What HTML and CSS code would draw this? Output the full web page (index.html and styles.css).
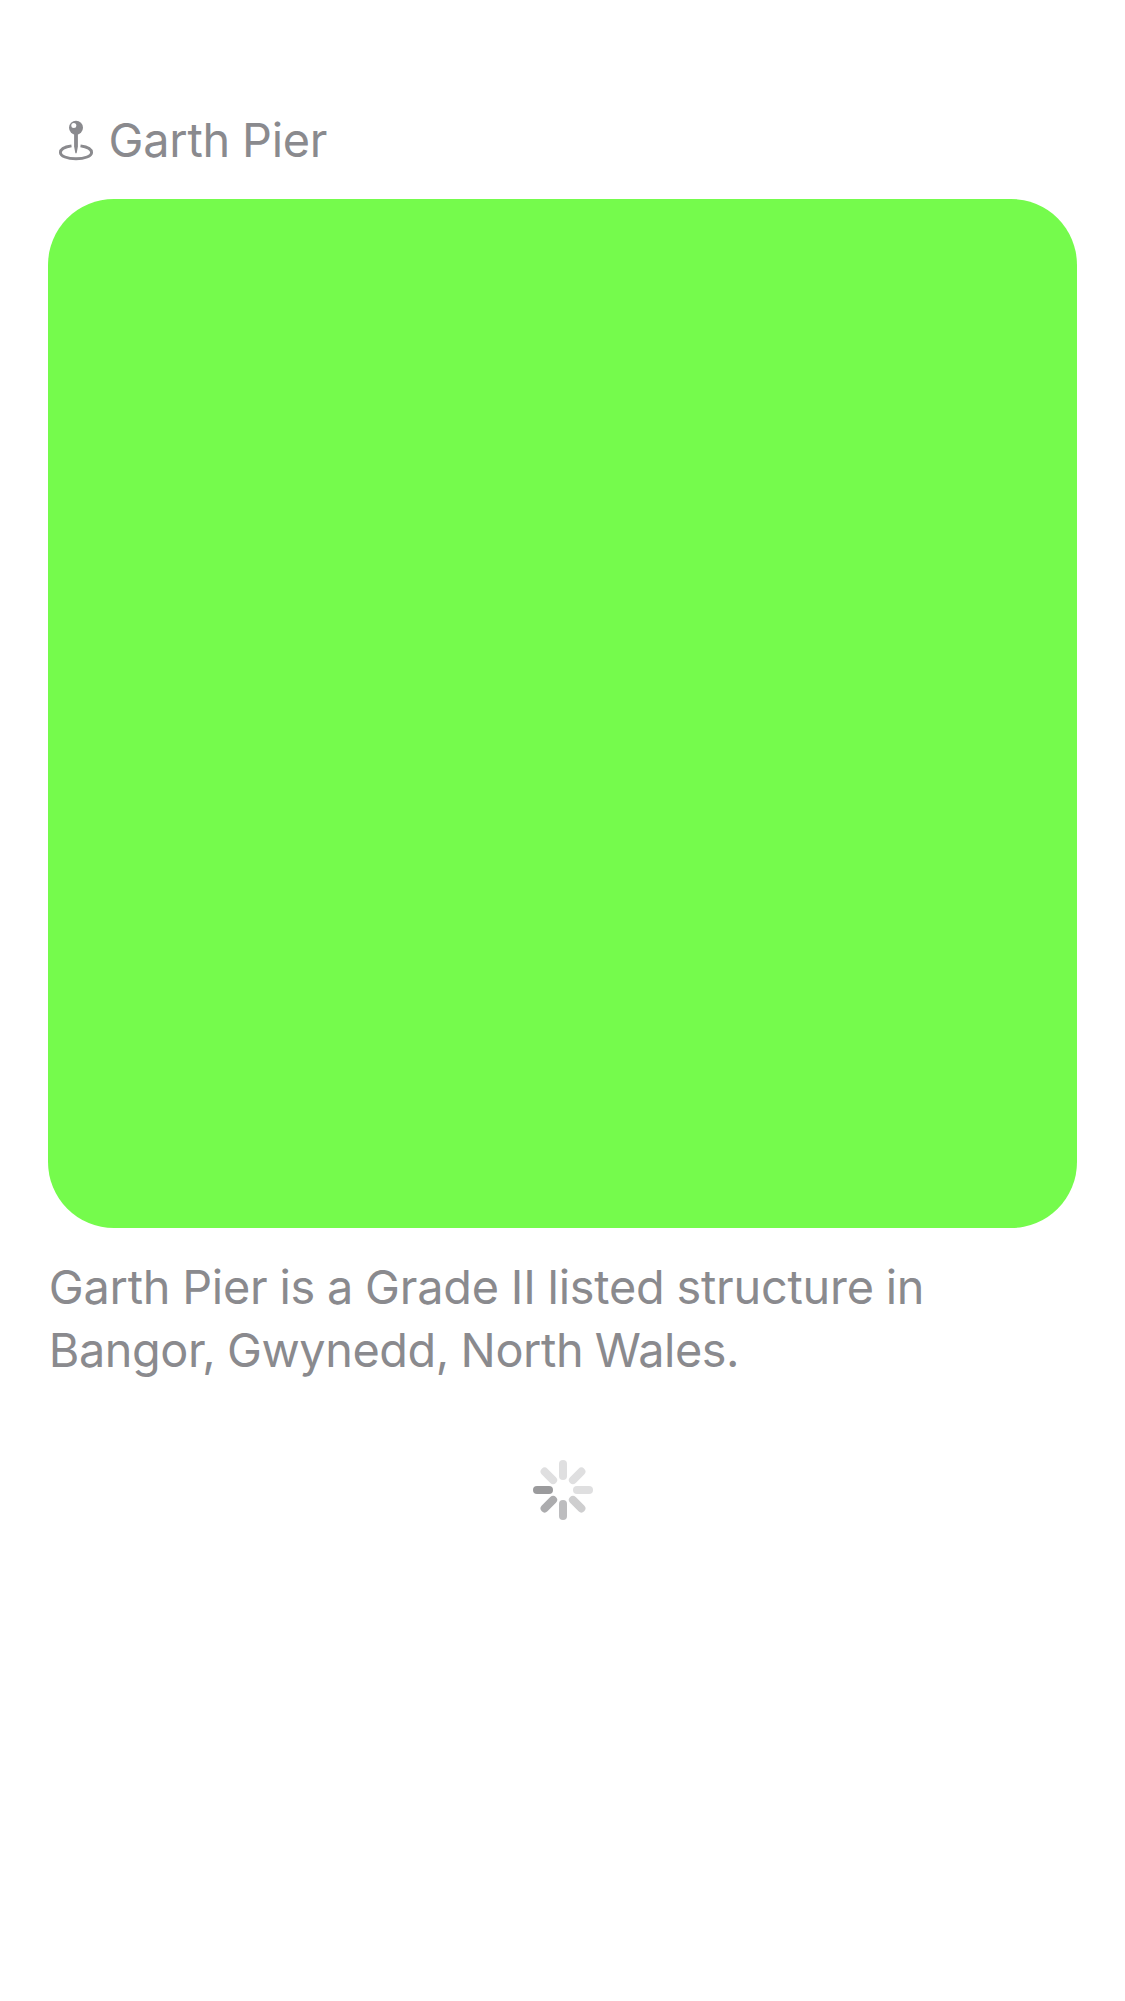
FILE: index.html
```
<!DOCTYPE html>
<html lang="en">
<head>
<meta charset="utf-8">
<title>Garth Pier</title>
<link rel="stylesheet" href="styles.css">
</head>
<body>
<main class="page">
  <header class="place">
    <svg class="pin" width="36" height="42" viewBox="58 120 36 42" aria-hidden="true">
      <path class="ring" d="M71.5 145.9C64.8 146.8 60.4 149.4 60.4 152.4C60.4 156.1 67.3 158.8 76 158.8S91.6 156.1 91.6 152.4C91.6 149.4 87.2 146.8 80.5 145.9"/>
      <path class="solid" d="M74.1 133H77.9V146.5L76.8 152.5Q76 154.5 75.2 152.5L74.1 146.5Z"/>
      <circle class="solid" cx="76" cy="127.7" r="7"/>
      <circle class="shine" cx="73.8" cy="125.4" r="2.5"/>
    </svg>
    <h1 class="name">Garth Pier</h1>
  </header>
  <div class="photo"></div>
  <p class="summary"><span class="line-a">Garth Pier is a Grade II listed structure in</span><br><span class="line-b">Bangor, Gwynedd, North Wales.</span></p>
  <svg class="spinner" width="60" height="60" viewBox="-30 -30 60 60" role="img" aria-label="Loading">
    <g stroke-width="8" stroke-linecap="round">
      <path stroke="#dfdfe0" d="M0-14V-26"/>
      <path stroke="#dfdfe0" d="M0-14V-26" transform="rotate(45)"/>
      <path stroke="#dfdfe0" d="M0-14V-26" transform="rotate(90)"/>
      <path stroke="#cececf" d="M0-14V-26" transform="rotate(135)"/>
      <path stroke="#bdbdbf" d="M0-14V-26" transform="rotate(180)"/>
      <path stroke="#acacae" d="M0-14V-26" transform="rotate(225)"/>
      <path stroke="#9b9b9d" d="M0-14V-26" transform="rotate(270)"/>
      <path stroke="#dfdfe0" d="M0-14V-26" transform="rotate(315)"/>
    </g>
  </svg>
</main>
</body>
</html>
```
FILE: styles.css
```
body {
  margin: 0;
  background: #fff;
  color: #8a8a8e;
  font: 400 46.8px/63px Inter, "Liberation Sans", sans-serif;
}

.page {
  display: flex;
  flex-direction: column;
  min-height: 2001px;
  box-sizing: border-box;
  padding: 109px 48px 0;
}

.place {
  display: flex;
  align-items: center;
  height: 63px;
  padding-left: 10px;
  gap: 14.5px;
}

.pin {
  flex: none;
}

.ring {
  fill: none;
  stroke: #8a8a8e;
  stroke-width: 2.9;
}

.solid {
  fill: #8a8a8e;
}

.shine {
  fill: #fff;
}

.name {
  margin: 0;
  font: inherit;
  letter-spacing: -0.22px;
  word-spacing: -0.9px;
  white-space: nowrap;
}

.photo {
  width: 1029px;
  height: 1029px;
  margin-top: 27px;
  border-radius: 66px;
  background: #75fb4c;
}

.summary {
  margin: 28px 0 0;
  padding-left: 0.7px;
  white-space: nowrap;
  word-spacing: -1px;
}

.line-a {
  letter-spacing: -0.2px;
}

.line-b {
  letter-spacing: -0.42px;
}

.spinner {
  align-self: center;
  margin-top: 78px;
  position: relative;
  left: 0.5px;
}
```
